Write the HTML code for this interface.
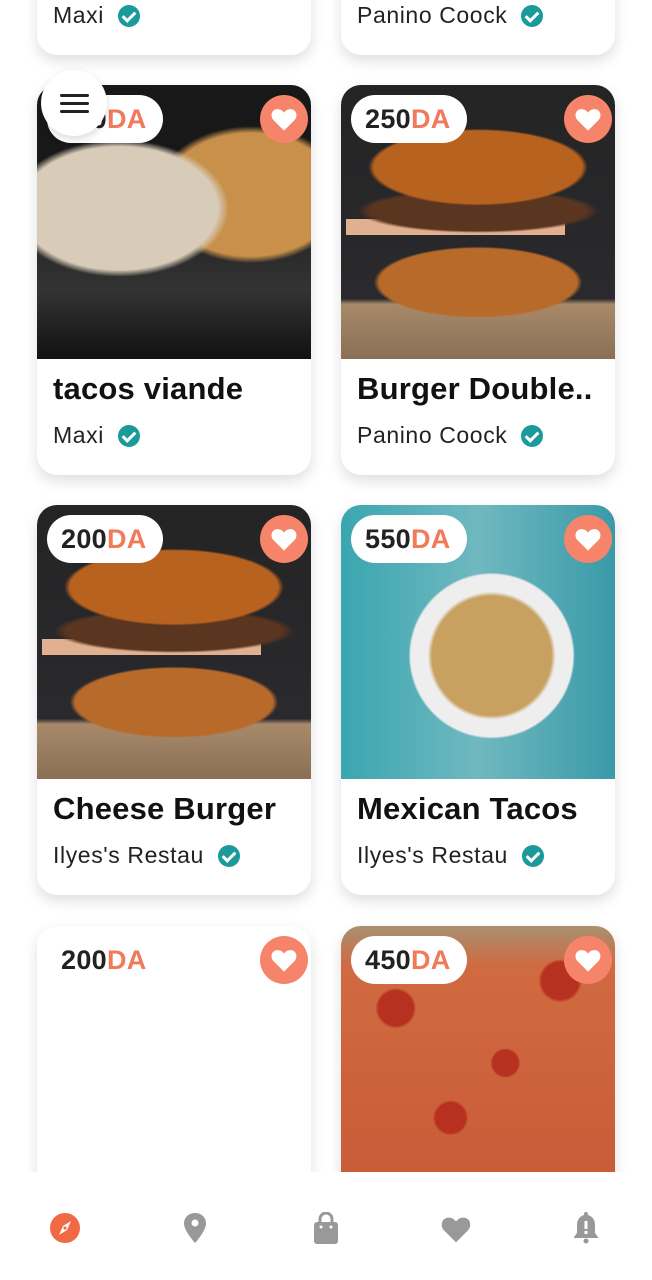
<!DOCTYPE html>
<html style="width:652px;height:1280px;overflow:hidden"><head><meta charset="utf-8"><style>
*{margin:0;padding:0;box-sizing:border-box}
body{width:652px;height:1280px;overflow:hidden;background:#fff;position:relative;font-family:"Liberation Sans",sans-serif}
.card{position:absolute;width:274px;height:390px;background:#fff;border-radius:20px;box-shadow:0 6px 14px rgba(0,0,0,.13);overflow:hidden}
.img{position:absolute;left:0;top:0;width:274px;height:274px}
.t{position:absolute;left:16px;top:286px;font-size:31px;font-weight:bold;color:#111;letter-spacing:.2px;white-space:nowrap}
.s{position:absolute;left:16px;top:337px;font-size:23px;color:#222;letter-spacing:.6px;white-space:nowrap;display:flex;align-items:center}
.s i{display:inline-block;width:22px;height:22px;border-radius:50%;background:#1a9a9a;margin-left:14px;position:relative}
.s i:after{content:"";position:absolute;left:7px;top:4px;width:5px;height:10px;border:solid #fff;border-width:0 3px 3px 0;transform:rotate(45deg)}
.p{position:absolute;left:10px;top:10px;width:116px;height:48px;border-radius:24px;background:#fff;font-size:27px;font-weight:bold;color:#222;line-height:49px;padding-left:14px;letter-spacing:.3px}
.p b{color:#f07a5a}
.h{position:absolute;left:223px;top:10px;width:48px;height:48px;border-radius:50%;background:#f5846a}
.h svg{position:absolute;left:10px;top:11px}
.burger{background:radial-gradient(ellipse 40% 14% at 50% 30%,#b8621f 0 95%,transparent 100%),radial-gradient(ellipse 44% 8% at 50% 46%,#5a3520 0 90%,transparent 100%),linear-gradient(#e0b090,#e0b090) 10% 52%/80% 6% no-repeat,radial-gradient(ellipse 38% 13% at 50% 72%,#b86a2a 0 95%,transparent 100%),linear-gradient(#242424 0,#2a2a2e 78%,#a88a6a 80%,#8a6f55 100%)}
.wrap{background:radial-gradient(ellipse 40% 25% at 30% 45%,#d8cbb8 0 90%,transparent 100%),radial-gradient(ellipse 35% 25% at 78% 40%,#c8904a 0 90%,transparent 100%),linear-gradient(#181818 0,#181818 30%,#333 75%,#111 100%)}
.tacos{background:radial-gradient(circle at 55% 55%,#c8a060 0 28%,#eee 30% 38%,transparent 39%),linear-gradient(90deg,#3aa6b0 0,#70b8c0 50%,#3a9aa8 100%)}
.pizza{background:radial-gradient(circle at 20% 30%,#b83020 0 6%,transparent 7%),radial-gradient(circle at 60% 50%,#b83020 0 6%,transparent 7%),radial-gradient(circle at 80% 20%,#b83020 0 6%,transparent 7%),radial-gradient(circle at 40% 70%,#b83020 0 6%,transparent 7%),linear-gradient(#a89070 0,#d06a40 15%,#c85a38 100%)}
.nav{position:absolute;left:0;top:1172px;width:652px;height:108px;background:#fff}
</style></head><body>

<div class="card" style="left:37px;top:-335px"><div class="s">Maxi<i></i></div></div>
<div class="card" style="left:341px;top:-335px"><div class="s">Panino Coock<i></i></div></div>

<div class="card" style="left:37px;top:85px"><div class="img wrap"></div><div class="p">250<b>DA</b></div><div class="h"><svg width="28" height="26" viewBox="0 0 24 22"><path d="M12 21 3 12C0 9 1 3 6 2.5 9 2.3 11 4 12 5.5 13 4 15 2.3 18 2.5 23 3 24 9 21 12Z" fill="#fff"/></svg></div><div class="t">tacos viande</div><div class="s">Maxi<i></i></div></div>
<div class="card" style="left:341px;top:85px"><div class="img burger"></div><div class="p">250<b>DA</b></div><div class="h"><svg width="28" height="26" viewBox="0 0 24 22"><path d="M12 21 3 12C0 9 1 3 6 2.5 9 2.3 11 4 12 5.5 13 4 15 2.3 18 2.5 23 3 24 9 21 12Z" fill="#fff"/></svg></div><div class="t">Burger Double..</div><div class="s">Panino Coock<i></i></div></div>

<div class="card" style="left:37px;top:505px"><div class="img burger"></div><div class="p">200<b>DA</b></div><div class="h"><svg width="28" height="26" viewBox="0 0 24 22"><path d="M12 21 3 12C0 9 1 3 6 2.5 9 2.3 11 4 12 5.5 13 4 15 2.3 18 2.5 23 3 24 9 21 12Z" fill="#fff"/></svg></div><div class="t">Cheese Burger</div><div class="s">Ilyes's Restau<i></i></div></div>
<div class="card" style="left:341px;top:505px"><div class="img tacos"></div><div class="p">550<b>DA</b></div><div class="h"><svg width="28" height="26" viewBox="0 0 24 22"><path d="M12 21 3 12C0 9 1 3 6 2.5 9 2.3 11 4 12 5.5 13 4 15 2.3 18 2.5 23 3 24 9 21 12Z" fill="#fff"/></svg></div><div class="t">Mexican Tacos</div><div class="s">Ilyes's Restau<i></i></div></div>

<div class="card" style="left:37px;top:926px;height:300px"><div class="p">200<b>DA</b></div><div class="h"><svg width="28" height="26" viewBox="0 0 24 22"><path d="M12 21 3 12C0 9 1 3 6 2.5 9 2.3 11 4 12 5.5 13 4 15 2.3 18 2.5 23 3 24 9 21 12Z" fill="#fff"/></svg></div></div>
<div class="card" style="left:341px;top:926px;height:300px"><div class="img pizza"></div><div class="p">450<b>DA</b></div><div class="h"><svg width="28" height="26" viewBox="0 0 24 22"><path d="M12 21 3 12C0 9 1 3 6 2.5 9 2.3 11 4 12 5.5 13 4 15 2.3 18 2.5 23 3 24 9 21 12Z" fill="#fff"/></svg></div></div>

<div style="position:absolute;left:41px;top:70px;width:66px;height:66px;border-radius:50%;background:#fff;box-shadow:0 3px 8px rgba(0,0,0,.15)">
<div style="position:absolute;left:19px;top:24px;width:29px;height:3px;background:#222;border-radius:2px"></div>
<div style="position:absolute;left:19px;top:32px;width:29px;height:3px;background:#222;border-radius:2px"></div>
<div style="position:absolute;left:19px;top:40px;width:29px;height:3px;background:#222;border-radius:2px"></div>
</div>

<div class="nav">
<svg style="position:absolute;left:49px;top:40px" width="32" height="32" viewBox="0 0 32 32"><circle cx="16" cy="16" r="15" fill="#f06a45"/><path d="M22 9 18 18 10 23 14 14Z" fill="#fff"/><circle cx="16" cy="16" r="1.6" fill="#f06a45"/></svg>
<svg style="position:absolute;left:183px;top:40px" width="24" height="32" viewBox="0 0 24 32"><path d="M12 1C5.5 1 1 5.5 1 11.5 1 19 12 31 12 31S23 19 23 11.5C23 5.5 18.5 1 12 1Z" fill="#999"/><circle cx="12" cy="11" r="3.5" fill="#fff"/></svg>
<svg style="position:absolute;left:312px;top:40px" width="28" height="32" viewBox="0 0 28 32"><rect x="2" y="10" width="24" height="22" rx="3" fill="#999"/><path d="M8 12V7a6 6 0 0 1 12 0v5" stroke="#999" stroke-width="3" fill="none"/><circle cx="9" cy="15" r="1.5" fill="#fff"/><circle cx="19" cy="15" r="1.5" fill="#fff"/></svg>
<svg style="position:absolute;left:440px;top:42px" width="32" height="30" viewBox="0 0 24 22"><path d="M12 21 3 12C0 9 1 3 6 2.5 9 2.3 11 4 12 5.5 13 4 15 2.3 18 2.5 23 3 24 9 21 12Z" fill="#999"/></svg>
<svg style="position:absolute;left:571px;top:38px" width="30" height="36" viewBox="0 0 30 36"><path d="M15 2c-1.5 0-2 1-2 2v1C8 6.5 6 10.5 6 15v8l-3 4v1h24v-1l-3-4v-8c0-4.5-2-8.5-7-10V4c0-1-.5-2-2-2Z" fill="#999"/><rect x="13.5" y="11" width="3" height="8" fill="#fff"/><rect x="13.5" y="21" width="3" height="3" fill="#fff"/><circle cx="15" cy="31" r="2.5" fill="#999"/></svg>
</div>
</body></html>
